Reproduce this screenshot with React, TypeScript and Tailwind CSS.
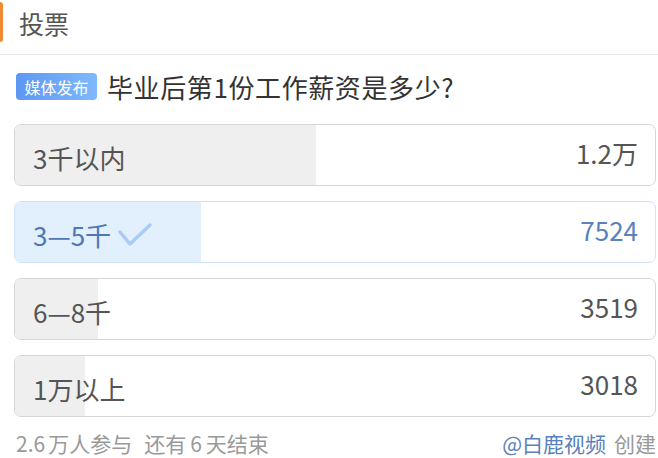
const FONT = "font-['Noto_Sans_CJK_SC','Noto_Sans',sans-serif]";

interface PollOption {
  label: string;
  count: string;
  pct: number;
  selected?: boolean;
}

const OPTIONS: PollOption[] = [
  { label: "3千以内", count: "1.2万", pct: 47 },
  { label: "3—5千", count: "7524", pct: 29, selected: true },
  { label: "6—8千", count: "3519", pct: 13 },
  { label: "1万以上", count: "3018", pct: 11 },
];

function CheckMark() {
  return (
    <svg width="36" height="26" viewBox="0 0 36 26" className="ml-[6px] mt-[2px]">
      <path
        d="M3 10 L13 22 L33 3"
        fill="none"
        stroke="#a9cbf6"
        strokeWidth="3.5"
        strokeLinecap="round"
        strokeLinejoin="round"
      />
    </svg>
  );
}

function OptionRow({ option }: { option: PollOption }) {
  const sel = option.selected;
  return (
    <div
      className={`relative h-[62px] overflow-hidden rounded-[7px] border ${
        sel ? "border-[#cfe2f9]" : "border-[#d6d6d6]"
      }`}
    >
      <div
        className={`absolute inset-y-0 left-0 ${sel ? "bg-[#e2effd]" : "bg-[#efefef]"}`}
        style={{ width: `${option.pct}%` }}
      />
      <div className="relative flex h-full items-center justify-between pl-[18px] pr-[17px]">
        <div className={`mt-[4px] flex items-center text-[26px] ${sel ? "text-[#4d78b5]" : "text-[#555]"}`}>
          <span>{option.label}</span>
          {sel && <CheckMark />}
        </div>
        <span className={`-mt-[6px] text-[26px] ${sel ? "text-[#5a81bc]" : "text-[#555]"}`}>
          {option.count}
        </span>
      </div>
    </div>
  );
}

export default function App() {
  return (
    <div className={`h-[458px] w-[658px] overflow-hidden bg-white ${FONT}`}>
      <header className="flex h-[55px] items-center border-b border-[#e6e6e6]">
        <div className="mt-[2px] h-[40px] w-[3px] self-start rounded-r-full bg-[#f08a32]" />
        <h1 className="ml-[16px] -mt-[8px] text-[25px] leading-none text-[#555]">投票</h1>
      </header>

      <div className="mt-[18px] flex items-center pl-[16px]">
        <span className="flex h-[27px] w-[81px] items-center justify-center rounded-[4px] bg-gradient-to-r from-[#5c97f4] to-[#80b9fc] text-[16px] text-white">
          媒体发布
        </span>
        <span className="ml-[10px] text-[26px] leading-none tracking-[0.6px] text-[#333]">
          毕业后第1份工作薪资是多少?
        </span>
      </div>

      <div className="mt-[24px] flex flex-col gap-[15px] pl-[14px] pr-[2px]">
        {OPTIONS.map((o) => (
          <OptionRow key={o.label} option={o} />
        ))}
      </div>

      <footer className="mt-[11px] flex h-[30px] items-center justify-between pl-[16px] pr-[2px] text-[21px] leading-none text-[#999]">
        <span>
          2.6<span className="ml-[3px]">万人参与</span>
          <span className="ml-[12px]">还有</span>
          <span className="mx-[4px]">6</span>天结束
        </span>
        <span>
          <span className="text-[#5a81bc]">@白鹿视频</span>
          <span className="ml-[8px]">创建</span>
        </span>
      </footer>
    </div>
  );
}
